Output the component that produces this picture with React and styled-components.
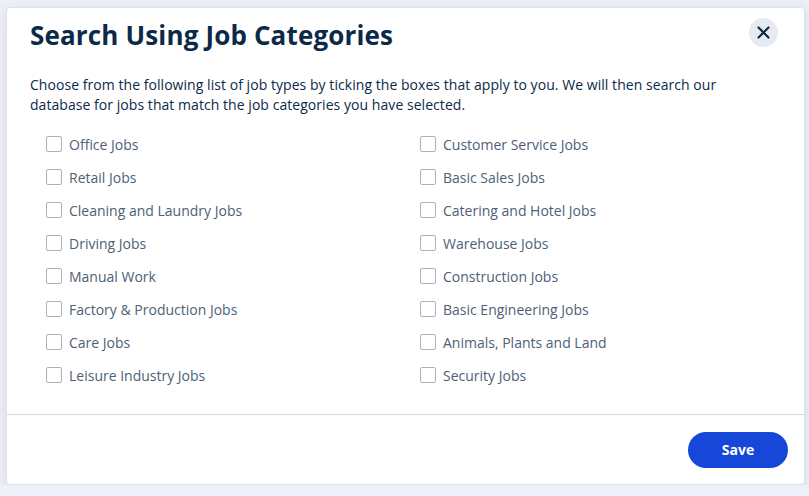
import React, { useState } from 'react';
import styled, { createGlobalStyle } from 'styled-components';

const colors = {
  page: '#eef0f7',
  navy: '#0c2a48',
  slate: '#4d6176',
  line: '#d3d8e4',
  box: '#a9b2bf',
  blue: '#1747d9',
  closeBg: '#e7eaf0',
};

const categories = [
  ['Office Jobs', 'Customer Service Jobs'],
  ['Retail Jobs', 'Basic Sales Jobs'],
  ['Cleaning and Laundry Jobs', 'Catering and Hotel Jobs'],
  ['Driving Jobs', 'Warehouse Jobs'],
  ['Manual Work', 'Construction Jobs'],
  ['Factory & Production Jobs', 'Basic Engineering Jobs'],
  ['Care Jobs', 'Animals, Plants and Land'],
  ['Leisure Industry Jobs', 'Security Jobs'],
].flat();

const GlobalStyle = createGlobalStyle`
  body {
    margin: 0;
    background: ${colors.page};
    font-family: "Open Sans", "Noto Sans", sans-serif;
  }
`;

const Modal = styled.div`
  box-sizing: border-box;
  width: 799px;
  height: 478px;
  margin: 7px 0 0 6px;
  background: white;
  border: 1px solid #dde1ea;
  border-radius: 4px;
  box-shadow: 0 4px 14px rgba(40, 60, 110, 0.12);
  display: flex;
  flex-direction: column;
`;

const Header = styled.div`
  display: flex;
  justify-content: space-between;
  align-items: flex-start;
  padding: 10px 26px 0 23px;
`;

const Title = styled.h2`
  margin: 0;
  color: ${colors.navy};
  font-size: 26px;
  line-height: 34px;
  font-weight: 700;
  letter-spacing: 0.15px;
`;

const CloseButton = styled.button`
  width: 29px;
  height: 29px;
  border: none;
  border-radius: 50%;
  background: ${colors.closeBg};
  color: ${colors.navy};
  display: flex;
  align-items: center;
  justify-content: center;
  padding: 0;
  cursor: pointer;
`;

const Body = styled.div`
  flex: 1;
  padding: 0 23px;
  border-bottom: 1px solid ${colors.line};
`;

const Intro = styled.p`
  max-width: 712px;
  margin: 23px 0 18px;
  color: ${colors.navy};
  font-size: 14px;
  line-height: 20px;
  letter-spacing: 0.05px;
`;

const Grid = styled.div`
  display: grid;
  grid-template-columns: 374px 1fr;
  row-gap: 11px;
  padding-left: 16px;
`;

const Option = styled.label`
  display: flex;
  align-items: center;
  gap: 7px;
  height: 22px;
  color: ${colors.slate};
  font-size: 14px;
  cursor: pointer;
`;

const Box = styled.span`
  box-sizing: border-box;
  width: 16px;
  height: 16px;
  border: 1px solid ${colors.box};
  border-radius: 2px;
  background: ${(p) => (p.$checked ? colors.blue : 'white')};
  flex-shrink: 0;
`;

const Footer = styled.div`
  height: 69px;
  display: flex;
  align-items: center;
  justify-content: flex-end;
  padding-right: 16px;
`;

const SaveButton = styled.button`
  width: 100px;
  height: 36px;
  border: none;
  border-radius: 18px;
  background: ${colors.blue};
  color: white;
  font-family: inherit;
  font-size: 14px;
  font-weight: 700;
  cursor: pointer;
`;

const App = () => {
  const [selected, setSelected] = useState({});

  const toggle = (name) =>
    setSelected((prev) => ({ ...prev, [name]: !prev[name] }));

  return (
    <>
      <GlobalStyle />
      <Modal>
        <Header>
          <Title>Search Using Job Categories</Title>
          <CloseButton aria-label="Close">
            <svg width="13" height="13" viewBox="0 0 13 13">
              <path d="M1.5 1.5l10 10M11.5 1.5l-10 10" stroke="currentColor" strokeWidth="2.2" strokeLinecap="round" />
            </svg>
          </CloseButton>
        </Header>
        <Body>
          <Intro>
            Choose from the following list of job types by ticking the boxes that apply to you. We will then search our
            database for jobs that match the job categories you have selected.
          </Intro>
          <Grid>
            {categories.map((name) => (
              <Option key={name} onClick={() => toggle(name)}>
                <Box $checked={!!selected[name]} />
                {name}
              </Option>
            ))}
          </Grid>
        </Body>
        <Footer>
          <SaveButton>Save</SaveButton>
        </Footer>
      </Modal>
    </>
  );
};

export default App;
